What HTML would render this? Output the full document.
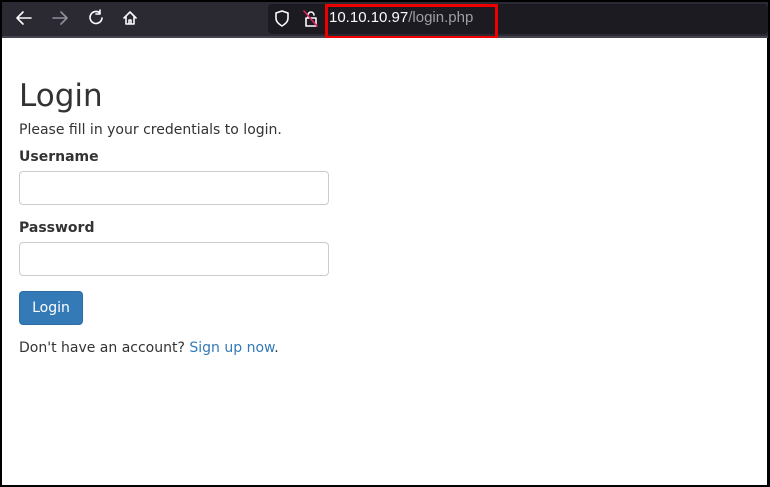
<!DOCTYPE html>
<html><head><style>
*{box-sizing:border-box;margin:0;padding:0}
body{width:770px;height:487px;background:#000;position:relative;overflow:hidden;font-family:"DejaVu Sans","Liberation Sans",sans-serif}
.tb{position:absolute;left:2px;top:2px;width:766px;height:36px;background:#2b2a33}
.tb .line{position:absolute;left:0;bottom:0;width:100%;height:2px;background:#45444d}
.url{position:absolute;left:266px;top:2px;width:500px;height:30px;background:#1c1b22;border-radius:4px}
.page{position:absolute;left:2px;top:38px;width:765px;height:447px;background:#fff;color:#333}
.red{position:absolute;left:325px;top:4px;width:173px;height:35px;border:3px solid #e00;}
h1{position:absolute;left:17px;top:40px;font-size:31px;font-weight:normal;color:#333}
.p{position:absolute;left:17px;font-size:14px}
input{position:absolute;left:17px;width:310px;height:34px;border:1px solid #ccc;border-radius:4px;background:#fff}
.btn{position:absolute;left:17px;top:253px;width:64px;height:34px;background:#337ab7;border:1px solid #2e6da4;border-radius:4px;color:#fff;font-size:14px;text-align:center;line-height:32px}
a{color:#337ab7;text-decoration:none}
</style></head><body>
<div class="tb"><div class="line"></div>
<div class="url"></div>
<svg style="position:absolute;left:0;top:0" width="330" height="36" fill="none" stroke-width="1.6" stroke-linecap="round" stroke-linejoin="round">
<path d="M15 16h14M15 16l6-6M15 16l6 6" stroke="#fbfbfe"/>
<path d="M51 16h14M65 16l-6-6M65 16l-6 6" stroke="#8f8f9d"/>
<path d="M98 11a6 6 0 1 0 2 5M98 8v4h-4" stroke="#fbfbfe"/>
<path d="M122 16l6-6 6 6M124 14v8h8v-8M127 22v-4h2v4" stroke="#fbfbfe"/>
<path d="M280 9l6 2v5c0 4-3 6-6 8-3-2-6-4-6-8v-5z" stroke="#fbfbfe"/>
<path d="M304 16h10v8h-10zM306 16v-3a3 3 0 0 1 6 0" stroke="#fbfbfe"/>
<path d="M302 9l13 15" stroke="#e0245e"/>
</svg>
<div style="position:absolute;left:327px;top:7px;font-size:15px;font-family:'Liberation Sans',sans-serif;color:#fbfbfe">10.10.10.97<span style="color:#9e9ea6">/login.php</span></div>
</div>
<div class="red"></div>
<div class="page">
<h1>Login</h1>
<div class="p" style="top:84px">Please fill in your credentials to login.</div>
<div class="p" style="top:111px;font-weight:bold">Username</div>
<input style="top:133px">
<div class="p" style="top:182px;font-weight:bold">Password</div>
<input style="top:204px">
<div class="btn">Login</div>
<div class="p" style="top:302px">Don't have an account? <a>Sign up now</a>.</div>
</div>
</body></html>
